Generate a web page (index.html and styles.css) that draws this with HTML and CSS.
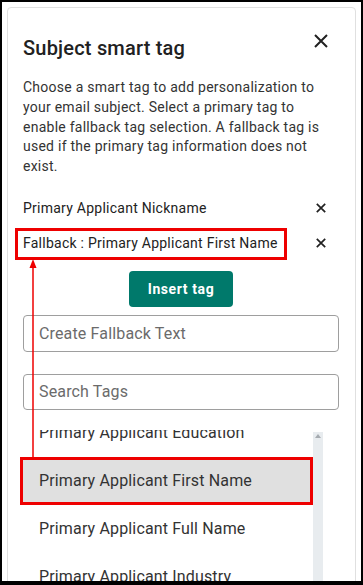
FILE: index.html
```html
<!DOCTYPE html>
<html lang="en">
<head>
    <meta charset="UTF-8">
    <meta name="viewport" content="width=device-width, initial-scale=1.0">
    <title>Subject smart tag</title>
    <link rel="stylesheet" href="styles.css">
</head>
<body>
    <div class="frame">
        <div class="panel">
            <div class="panel-head">
                <h2 class="panel-title">Subject smart tag</h2>
                <button class="close-btn" aria-label="Close">
                    <svg width="14" height="14" viewBox="0 0 14 14"><path d="M1 1 L13 13 M13 1 L1 13" stroke="#212121" stroke-width="2" fill="none"/></svg>
                </button>
            </div>
            <p class="panel-desc">Choose a smart tag to add personalization to your email subject. Select a primary tag to enable fallback tag selection. A fallback tag is used if the primary tag information does not exist.</p>

            <div class="chosen">
                <div class="chosen-row">
                    <span>Primary Applicant Nickname</span>
                    <button class="remove-btn" aria-label="Remove">
                        <svg width="10" height="10" viewBox="0 0 10 10"><path d="M0.8 0.8 L9.2 9.2 M9.2 0.8 L0.8 9.2" stroke="#212121" stroke-width="1.7" fill="none"/></svg>
                    </button>
                </div>
                <div class="chosen-row">
                    <span>Fallback : Primary Applicant First Name</span>
                    <button class="remove-btn" aria-label="Remove">
                        <svg width="10" height="10" viewBox="0 0 10 10"><path d="M0.8 0.8 L9.2 9.2 M9.2 0.8 L0.8 9.2" stroke="#212121" stroke-width="1.7" fill="none"/></svg>
                    </button>
                </div>
            </div>

            <div class="actions">
                <button class="insert-btn">Insert tag</button>
            </div>

            <input class="field field-fallback" type="text" placeholder="Create Fallback Text">
            <input class="field field-search" type="text" placeholder="Search Tags">

            <div class="tag-list">
                <ul class="tag-items">
                    <li>Primary Applicant Education</li>
                    <li class="selected">Primary Applicant First Name</li>
                    <li>Primary Applicant Full Name</li>
                    <li>Primary Applicant Industry</li>
                </ul>
                <div class="scrollbar"><span class="scroll-up"></span></div>
            </div>
        </div>

        <!-- annotation marks drawn on top of the screenshot -->
        <div class="mark-box"></div>
        <svg class="mark-arrow" width="10" height="200" viewBox="0 0 10 200">
            <path d="M5 0 L8.5 9 L1.5 9 Z" fill="#ee0000"/>
            <path d="M5 8 L5 198" stroke="#ee0000" stroke-width="1.5"/>
        </svg>
    </div>
</body>
</html>
```

FILE: styles.css
```css
* {
    box-sizing: border-box;
}
body {
    margin: 0;
    font-family: Roboto, "Liberation Sans", sans-serif;
    background: #fff;
}
.frame {
    position: relative;
    width: 363px;
    height: 585px;
    border-style: solid;
    border-color: #000;
    border-width: 2px 2px 4px 2px;
    background: #fff;
    overflow: hidden;
}
.panel {
    width: 349px;
    margin: 5px 0 0 5px;
    padding: 0 16px 0 15px;
    border: 1px solid #e0e0e0;
    border-radius: 4px;
    background: #fff;
}
.panel-head {
    display: flex;
    justify-content: space-between;
    align-items: flex-start;
    padding-top: 26px;
}
.panel-title {
    margin: 0;
    font-size: 20px;
    line-height: 28px;
    font-weight: 500;
    letter-spacing: 0.2px;
    color: #212121;
}
.close-btn,
.remove-btn {
    display: flex;
    padding: 0;
    border: none;
    background: none;
    cursor: pointer;
}
.close-btn {
    margin-right: 11px;
}
.panel-desc {
    margin: 16px 0 0;
    font-size: 14px;
    line-height: 19.75px;
    letter-spacing: 0.25px;
    color: #333;
}
.chosen {
    display: flex;
    flex-direction: column;
    gap: 15px;
    margin-top: 21px;
}
.chosen-row {
    display: flex;
    justify-content: space-between;
    align-items: center;
    font-size: 14px;
    line-height: 20px;
    letter-spacing: 0.25px;
    color: #222;
}
.remove-btn {
    margin-right: 13px;
}
.actions {
    display: flex;
    justify-content: center;
    margin-top: 18px;
}
.insert-btn {
    height: 36px;
    padding: 0 19px;
    border: none;
    border-radius: 4px;
    background: #00796b;
    color: #fff;
    font-family: Roboto, "Liberation Sans", sans-serif;
    font-size: 14px;
    font-weight: 700;
    letter-spacing: 0.6px;
}
.field {
    display: block;
    width: 100%;
    padding: 0 15px;
    border: 1px solid #9e9e9e;
    border-radius: 4px;
    font-family: Roboto, "Liberation Sans", sans-serif;
    font-size: 16px;
    letter-spacing: 0.15px;
    color: #333;
    background: #fff;
}
.field::placeholder {
    color: #6b6b6b;
}
.field-fallback {
    height: 37px;
    margin-top: 8px;
}
.field-search {
    height: 36px;
    margin-top: 22px;
}
.tag-list {
    display: flex;
    height: 170px;
    margin: 20px 16px 0 -3px;
    overflow: hidden;
}
.tag-items {
    flex: 1;
    margin: -21px 0 0;
    padding: 0;
    list-style: none;
}
.tag-items li {
    height: 48px;
    padding-left: 19px;
    font-size: 16px;
    line-height: 48px;
    letter-spacing: 0.15px;
    color: #333;
}
.tag-items li.selected {
    background: #e0e0e0;
    outline: 3px solid #ee0000;
    outline-offset: -3px;
}
.scrollbar {
    width: 10px;
    margin-top: 2px;
    background: #e8ecef;
    display: flex;
    justify-content: center;
    padding-top: 2px;
}
.scroll-up {
    width: 0;
    height: 0;
    border-left: 3px solid transparent;
    border-right: 3px solid transparent;
    border-bottom: 4px solid #a6abb0;
}

/* red annotation marks */
.mark-box {
    position: absolute;
    left: 13px;
    top: 226px;
    width: 272px;
    height: 32px;
    border: 3px solid #ee0000;
}
.mark-arrow {
    position: absolute;
    left: 26px;
    top: 257px;
}
```
